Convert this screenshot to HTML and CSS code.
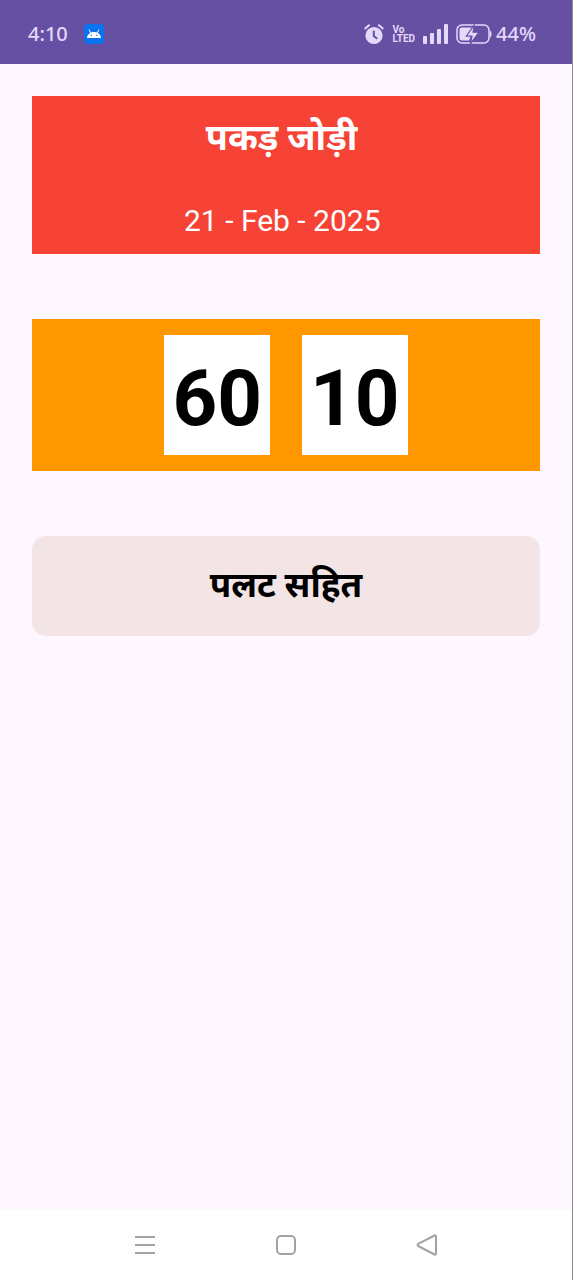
FILE: index.html
```html
<!DOCTYPE html>
<html lang="hi">
<head>
<meta charset="utf-8">
<meta name="viewport" content="width=device-width, initial-scale=1">
<title>पकड़ जोड़ी</title>
<link rel="stylesheet" href="styles.css">
</head>
<body>
<div class="screen">
  <header class="status">
    <div class="status-left">
      <time class="clock">4:10</time>
      <svg class="app-icon" width="20" height="20" viewBox="0 0 20 20" aria-hidden="true">
        <rect width="20" height="20" rx="4" fill="#0a74f0"/>
        <path d="M3 14c.2-3.600 3.200-6 7-6s6.800 2.400 7 6z" fill="#fff"/>
        <path d="M5.200 6l1.600 3M14.800 6l-1.600 3" stroke="#fff" stroke-width="1" stroke-linecap="round"/>
        <circle cx="7.200" cy="11.300" r=".7" fill="#0a74f0"/><circle cx="12.800" cy="11.300" r=".7" fill="#0a74f0"/>
      </svg>
    </div>
    <div class="status-right">
      <svg width="20" height="22" viewBox="0 0 20 22" aria-hidden="true">
        <circle cx="10" cy="12.500" r="8.600" fill="#e3d9fb"/>
        <path d="M1.200 5.400L5 2.200M18.800 5.400L15 2.200" stroke="#e3d9fb" stroke-width="2" stroke-linecap="round"/>
        <path d="M9.800 8.500v4.500l2.800 2.200" fill="none" stroke="#6650a4" stroke-width="2" stroke-linecap="round" stroke-linejoin="round"/>
      </svg>
      <span class="volte"><span>Vo</span><span>LTED</span></span>
      <svg width="25" height="20" viewBox="0 0 25 20" fill="#e3d9fb" aria-hidden="true">
        <rect x="0" y="12" width="4" height="8" rx="1"/><rect x="7" y="9" width="4" height="11" rx="1"/><rect x="14" y="5" width="4" height="15" rx="1"/><rect x="21" y="0" width="4" height="20" rx="1"/>
      </svg>
      <span class="battery">
        <svg width="36" height="20" viewBox="0 0 36 20" aria-hidden="true">
          <rect x="1" y="1" width="32" height="18" rx="5" fill="none" stroke="#e3d9fb" stroke-width="1.500"/>
          <path d="M34 6.500c2 1 2 6 0 7z" fill="#e3d9fb"/>
          <path d="M6 3.500h10.500L10 12.500h4.500l-1.200 4H6a2.500 2.500 0 0 1-2.500-2.500V6A2.500 2.500 0 0 1 6 3.500z" fill="#e3d9fb"/>
          <path d="M18.500 .5L10.500 12h5.500L14.300 20 23 8.200H17z" fill="#e3d9fb" stroke="#6650a4" stroke-width="1.200"/>
        </svg>
        <span>44%</span>
      </span>
    </div>
  </header>
  <main class="content">
    <section class="heading">
      <h1 class="title">पकड़ जोड़ी&nbsp;</h1>
      <p class="date">21 - Feb - 2025&nbsp;</p>
    </section>
    <section class="numbers">
      <span class="tile">60</span>
      <span class="tile">10</span>
    </section>
    <section class="note">
      <p class="note-text">पलट सहित</p>
    </section>
  </main>
  <nav class="nav">
    <button class="nav-button" type="button" aria-label="Recent apps">
      <svg width="24" height="24" viewBox="0 0 24 24" fill="none" stroke="#a3a3a3" stroke-width="2"><path d="M2 4h20M2 12h20M2 20h20"/></svg>
    </button>
    <button class="nav-button" type="button" aria-label="Home">
      <svg width="24" height="24" viewBox="0 0 24 24" fill="none" stroke="#a3a3a3" stroke-width="2"><rect x="3" y="3" width="18" height="18" rx="4"/></svg>
    </button>
    <button class="nav-button" type="button" aria-label="Back">
      <svg width="24" height="24" viewBox="0 0 24 24" fill="none" stroke="#a3a3a3" stroke-width="2" stroke-linejoin="round"><path d="M3.200 10.800L19.500 2.500Q21 2 21 3.500V20.500Q21 22 19.500 21.500L3.200 13Q2 12 3.200 10.800z"/></svg>
    </button>
  </nav>
</div>
</body>
</html>
```
FILE: styles.css
```css
* {
  box-sizing: border-box;
}

body {
  margin: 0;
  font-family: Roboto, "Noto Sans Devanagari", "Noto Sans", sans-serif;
  color: #000;
}

.screen {
  display: flex;
  flex-direction: column;
  min-height: 100vh;
  border-right: 1px solid #8f8a94;
  background: #fef7ff;
}

.status {
  display: flex;
  justify-content: space-between;
  align-items: center;
  height: 64px;
  padding: 4px 36px 0 28px;
  background: #6650a4;
  color: #e3d9fb;
  font-family: "Noto Sans", sans-serif;
  font-size: 20px;
  font-weight: 500;
  line-height: 24px;
}

.status-left {
  display: flex;
  align-items: center;
  gap: 16px;
}

.status-right {
  display: flex;
  align-items: center;
  gap: 8px;
}

.status svg {
  display: block;
}

.volte {
  display: flex;
  flex-direction: column;
  font-family: Roboto, sans-serif;
  font-size: 10px;
  font-weight: 700;
  line-height: 9px;
}

.battery {
  display: flex;
  align-items: center;
  gap: 4px;
}

.content {
  display: flex;
  flex: 1;
  flex-direction: column;
  gap: 65px;
  padding: 32px;
}

.heading {
  padding: 14px 16px;
  background: #f64336;
  color: #fff;
  text-align: center;
}

.title {
  margin: 0 0 36px;
  font-size: 36px;
  font-weight: 700;
  line-height: 56px;
}

.date {
  margin: 0;
  font-size: 30px;
  line-height: 38px;
}

.numbers {
  display: flex;
  justify-content: center;
  gap: 32px;
  padding: 16px;
  background: #ff9800;
}

.tile {
  padding: 20px 8px 12px;
  background: #fff;
  font-size: 78px;
  font-weight: 700;
  line-height: 88px;
}

.note {
  padding: 16px;
  border-radius: 14px;
  background: #f3e4e6;
  text-align: center;
}

.note-text {
  margin: 0;
  font-size: 35px;
  font-weight: 700;
  line-height: 68px;
}

.nav {
  display: flex;
  justify-content: center;
  align-items: center;
  gap: 117px;
  height: 70px;
  background: #fff;
}

.nav-button {
  padding: 0;
  border: 0;
  background: none;
}

.nav-button svg {
  display: block;
}
```
